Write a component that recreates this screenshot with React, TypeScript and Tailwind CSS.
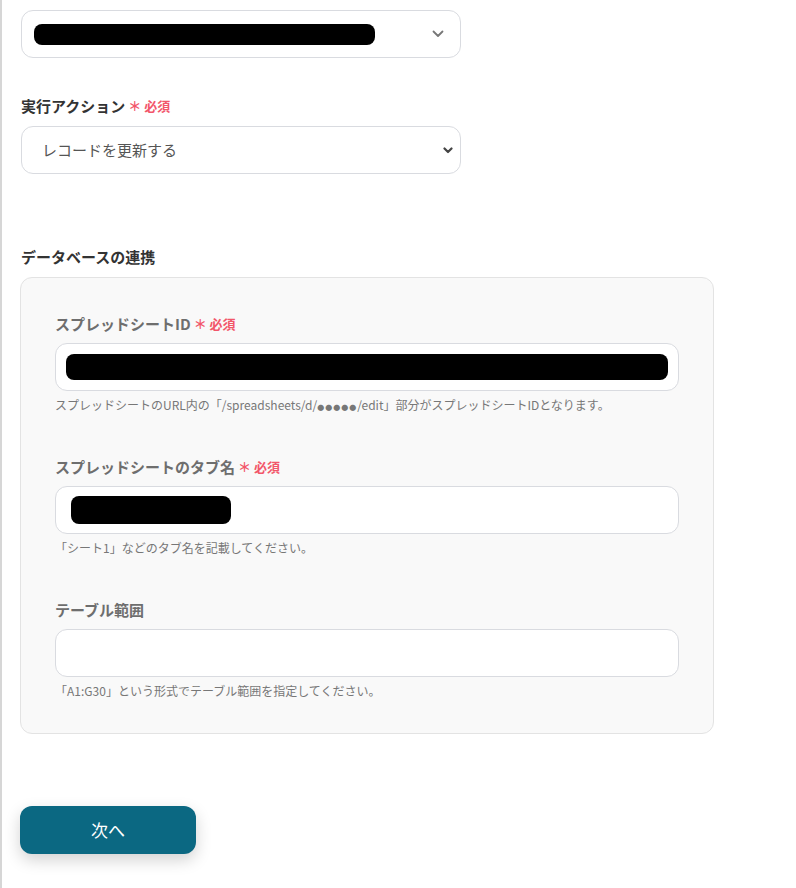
const font = { fontFamily: '"Noto Sans CJK JP", "Noto Sans", sans-serif' };

const Required = () => (
  <span className="ml-[3px] text-[13px] font-bold text-[#f2566a]">＊ 必須</span>
);

const Redacted = ({ className }: { className: string }) => (
  <div className={`rounded-[8px] bg-black ${className}`} />
);

interface FieldProps {
  label: string;
  required?: boolean;
  help: React.ReactNode;
  children?: React.ReactNode;
}

const Field = ({ label, required, help, children }: FieldProps) => (
  <div>
    <div className="flex h-5 items-center text-[15px] font-bold text-[#6e6e6e]">
      {label}
      {required && <Required />}
    </div>
    <div className="mt-[9px] flex h-[48px] items-center rounded-[12px] border border-[#d9dbe0] bg-white px-[10px]">
      {children}
    </div>
    <p className="mt-[5px] h-[18px] text-[12px] leading-[18px] text-[#777]">{help}</p>
  </div>
);

export default function App() {
  return (
    <div style={font} className="min-h-[888px] border-l-2 border-[#d6d6d6] bg-white pl-[18px] pt-[10px] text-[#333]">
      <div className="ml-px flex h-[48px] w-[440px] items-center justify-between rounded-[12px] border border-[#d9dbe0] bg-white pl-[12px] pr-[16px]">
        <Redacted className="h-[21px] w-[341px]" />
        <svg width="12" height="8" viewBox="0 0 12 8" fill="none">
          <path d="M1.5 1.5 6 6l4.5-4.5" stroke="#777" strokeWidth="1.8" strokeLinecap="round" strokeLinejoin="round" />
        </svg>
      </div>

      <div className="ml-px mt-[38px] flex h-5 items-center text-[15px] font-bold text-[#333]">
        実行アクション
        <Required />
      </div>
      <div className="ml-px mt-[10px] flex h-[48px] w-[440px] items-center justify-between rounded-[12px] border border-[#d9dbe0] bg-white pl-[20px] pr-[7px]">
        <span className="text-[15px] text-[#555]">レコードを更新する</span>
        <svg width="10" height="7" viewBox="0 0 10 7" fill="none">
          <path d="M1.5 1.5 5 5l3.5-3.5" stroke="#444" strokeWidth="2.2" strokeLinecap="round" strokeLinejoin="round" />
        </svg>
      </div>

      <div className="ml-px mt-[73px] flex h-5 items-center text-[15px] font-bold text-[#333]">
        データベースの連携
      </div>
      <div className="mt-[10px] w-[694px] rounded-[12px] border border-[#e3e3e3] bg-[#f9f9f9] px-[34px] pb-[33px] pt-[36px]">
        <div className="flex flex-col gap-[43px]">
          <Field
            label="スプレッドシートID"
            required
            help={
              <>
                スプレッドシートのURL内の「/spreadsheets/d/
                <span className="text-[7px] tracking-[1px] align-middle">●●●●●</span>
                /edit」部分がスプレッドシートIDとなります。
              </>
            }
          >
            <Redacted className="h-[26px] w-full" />
          </Field>
          <Field label="スプレッドシートのタブ名" required help="「シート1」などのタブ名を記載してください。">
            <Redacted className="ml-[5px] h-[28px] w-[160px]" />
          </Field>
          <Field label="テーブル範囲" help="「A1:G30」という形式でテーブル範囲を指定してください。" />
        </div>
      </div>

      <button className="mt-[72px] flex h-[48px] w-[176px] items-center justify-center rounded-[12px] bg-[#0b6882] text-[17px] text-white shadow-[0_6px_16px_rgba(0,0,0,0.18)]">
        次へ
      </button>
    </div>
  );
}
